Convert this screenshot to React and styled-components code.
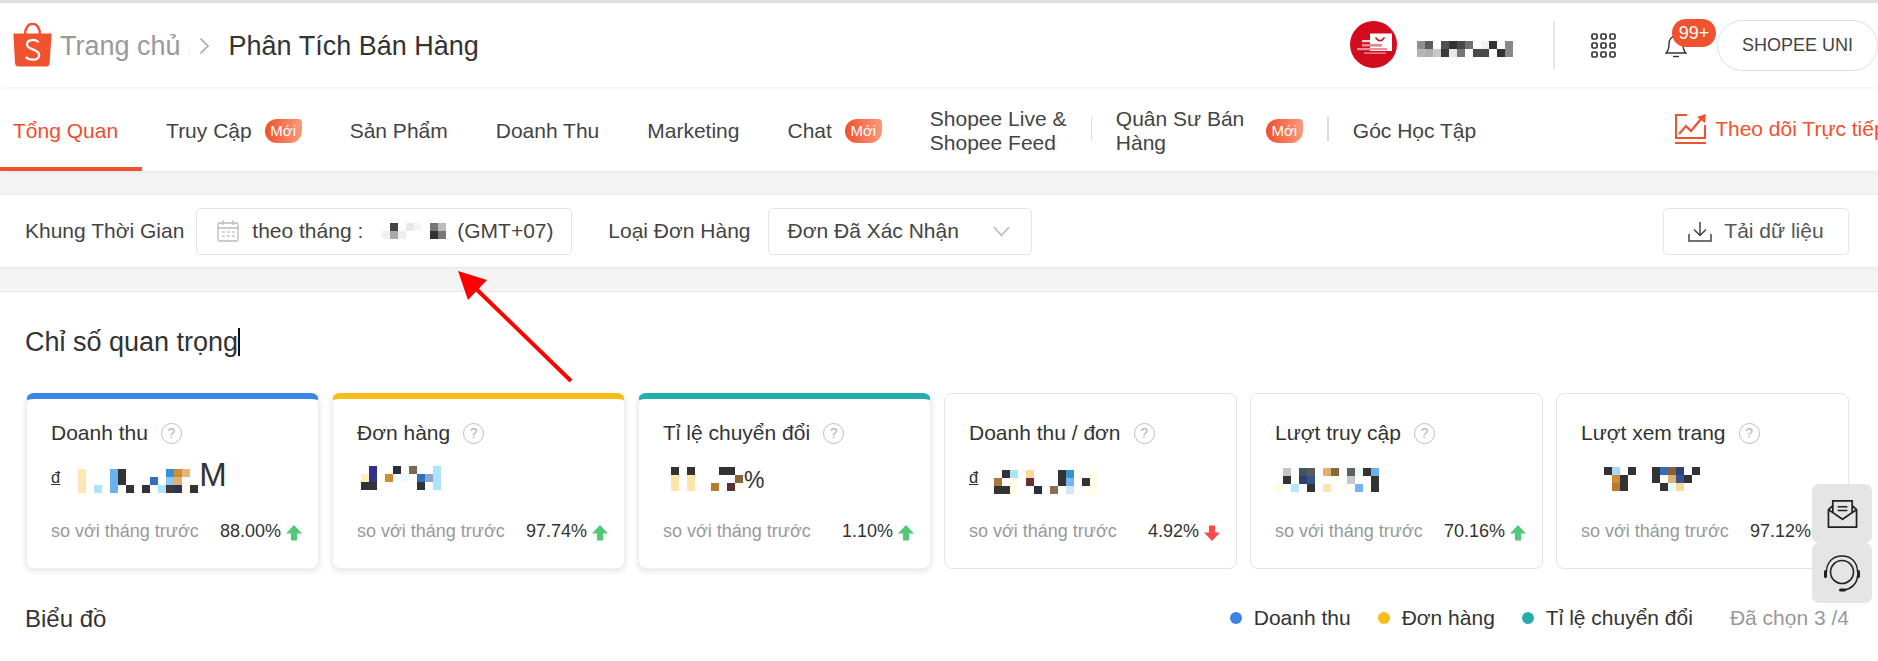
import React from "react";
import styled, { createGlobalStyle } from "styled-components";

const D = "#333333";
const Global = createGlobalStyle`
  html, body { margin: 0; padding: 0; width: 100%; height: 661px; overflow: hidden; background: #fff; }
  body { font-family: "Liberation Sans", Arial, sans-serif; color: #333; }
  #root { height: 661px; overflow: hidden; }
`;

const Page = styled.div`
  position: relative;
  width: 1878px;
  height: 661px;
  overflow: hidden;
  background: #f4f4f4;
  border-top: 3px solid #dddde3;
  box-sizing: border-box;
`;
const Header = styled.header`
  display: flex;
  align-items: center;
  height: 84px;
  padding-left: 13px;
  background: #fff;
  box-shadow: 0 1px 4px rgba(0, 0, 0, 0.06);
  position: relative;
  z-index: 2;
`;
const Crumb = styled.span`
  font-size: 27px;
  color: ${(p) => p.$color};
  margin-left: ${(p) => p.$ml}px;
  margin-top: 2px;
`;
const Chevron = styled.svg`
  width: 11px;
  height: 18px;
  margin-left: 18px;
  margin-top: 2px;
`;
const HeaderRight = styled.div`
  display: flex;
  align-items: center;
  margin-left: auto;
`;
const Avatar = styled.svg`
  width: 47px;
  height: 47px;
  margin-right: 20px;
  margin-top: -2px;
`;
const VDivider = styled.div`
  width: 2px;
  height: 48px;
  background: #e6e6e6;
  margin-left: 40px;
`;
const GridIcon = styled.svg`
  width: 25px;
  height: 25px;
  margin-left: 36px;
`;
const BellWrap = styled.div`
  position: relative;
  width: 22px;
  height: 24px;
  margin-left: 49px;
  margin-top: 2px;
`;
const Badge99 = styled.span`
  position: absolute;
  left: 7px;
  top: -15px;
  width: 44px;
  height: 28px;
  border-radius: 14px;
  background: #f0512e;
  color: #fff;
  font-size: 18px;
  line-height: 28px;
  text-align: center;
`;
const Pill = styled.button`
  width: 161px;
  height: 51px;
  margin-left: 30px;
  margin-top: 1px;
  border: 1px solid #dedede;
  border-radius: 26px;
  background: #fff;
  color: #444;
  font-family: inherit;
  font-size: 18px;
  padding: 0;
  box-sizing: border-box;
`;

const Nav = styled.nav`
  display: flex;
  align-items: stretch;
  height: 84px;
  background: #fff;
  white-space: nowrap;
  overflow: hidden;
  box-shadow: 0 1px 4px rgba(0, 0, 0, 0.06);
`;
const Tab = styled.div`
  display: flex;
  align-items: center;
  flex-shrink: 0;
  height: 84px;
  box-sizing: border-box;
  padding: 4px 24px 0 ${(p) => (p.$first ? 13 : 24)}px;
  font-size: 21px;
  line-height: 24px;
  color: ${(p) => (p.$active ? "#ee4d2d" : "#444")};
  border-bottom: 4px solid ${(p) => (p.$active ? "#f0512e" : "transparent")};
`;
const TabText = styled.span`
  white-space: ${(p) => (p.$wrap ? "normal" : "nowrap")};
  width: ${(p) => (p.$width ? `${p.$width}px` : "auto")};
  margin-top: 4px;
`;
const NewBadge = styled.span`
  display: inline-flex;
  align-items: center;
  justify-content: center;
  width: 37px;
  height: 24px;
  margin-left: 13px;
  margin-top: 4px;
  border-radius: 12px 4px 12px 12px;
  background: linear-gradient(90deg, #f0512e, #fb9a7c);
  color: #fff;
  font-size: 15px;
`;
const NavSep = styled.div`
  align-self: center;
  flex-shrink: 0;
  width: ${(p) => p.$w}px;
  height: 24px;
  background: #dddddd;
`;
const TrackLink = styled.div`
  display: flex;
  align-items: center;
  flex-shrink: 0;
  margin-left: 174px;
  color: #f0512e;
  font-size: 21px;
`;
const TrackIcon = styled.svg`
  width: 33px;
  height: 32px;
  margin-right: 8px;
`;

const FilterBar = styled.section`
  display: flex;
  align-items: center;
  height: 72px;
  margin-top: 24px;
  padding: 0 29px 0 25px;
  background: #fff;
  box-shadow: 0 1px 4px rgba(0, 0, 0, 0.06);
  font-size: 21px;
  color: #444;
`;
const FilterLabel = styled.span`
  flex-shrink: 0;
  margin-left: ${(p) => p.$ml || 0}px;
`;
const Field = styled.div`
  display: flex;
  align-items: center;
  flex-shrink: 0;
  height: 47px;
  width: ${(p) => p.$w}px;
  margin-left: ${(p) => p.$ml}px;
  box-sizing: border-box;
  border: 1px solid #e5e5e5;
  border-radius: 5px;
  padding-left: ${(p) => p.$pl}px;
  background: #fff;
  white-space: nowrap;
`;
const Zone = styled.span`
  margin-left: 11px;
`;
const CalIcon = styled.svg`
  width: 22px;
  height: 22px;
  margin-right: 13px;
  flex-shrink: 0;
`;
const Chev2 = styled.svg`
  width: 17px;
  height: 11px;
  margin-left: 34px;
`;
const DownloadBtn = styled.button`
  display: flex;
  align-items: center;
  justify-content: center;
  width: 186px;
  height: 47px;
  margin-left: auto;
  box-sizing: border-box;
  border: 1px solid #e5e5e5;
  border-radius: 5px;
  background: #fff;
  color: #555;
  font-family: inherit;
  font-size: 21px;
  padding: 0;
`;
const DownIcon = styled.svg`
  width: 24px;
  height: 21px;
  margin-right: 12px;
`;

const Content = styled.main`
  margin-top: 24px;
  height: 380px;
  box-sizing: border-box;
  padding: 35px 29px 0 25px;
  background: #fff;
  border-top: 1px solid #ececec;
`;
const Title = styled.h2`
  display: flex;
  align-items: center;
  margin: 0;
  height: 30px;
  font-size: 27px;
  font-weight: 400;
  color: #333;
`;
const Caret = styled.span`
  display: inline-block;
  width: 1.5px;
  height: 28px;
  background: #111;
`;
const Cards = styled.div`
  display: grid;
  grid-template-columns: repeat(6, 293px);
  column-gap: 13px;
  margin-top: 36px;
  margin-left: 1px;
`;
const Card = styled.article`
  height: 176px;
  box-sizing: border-box;
  padding: 26px 16px 0 24px;
  border: 1px solid ${(p) => (p.$color ? "#eeeeee" : "#e4e4e4")};
  border-radius: 8px;
  background: #fff;
  overflow: hidden;
  position: relative;
  ${(p) =>
    p.$color
      ? `border-top: 6px solid ${p.$color}; padding-top: 21px; box-shadow: 0 2px 6px rgba(0,0,0,0.12);`
      : ""}
`;
const CardTitle = styled.div`
  display: flex;
  align-items: center;
  height: 26px;
  font-size: 21px;
  color: #333;
  white-space: nowrap;
`;
const Help = styled.span`
  display: inline-flex;
  align-items: center;
  justify-content: center;
  width: 21px;
  height: 21px;
  margin-left: 13px;
  border: 1.5px solid #bdbdbd;
  border-radius: 50%;
  box-sizing: border-box;
  color: #b5b5b5;
  font-size: 14px;
`;
const ValueRow = styled.div`
  display: flex;
  align-items: center;
  height: 40px;
  margin-top: 11px;
`;
const Currency = styled.span`
  font-size: 16.5px;
  text-decoration: underline;
  color: #333;
`;
const BigSuffix = styled.span`
  font-size: ${(p) => p.$size}px;
  line-height: 32px;
  color: #333;
  margin-left: 1px;
  margin-top: ${(p) => p.$mt || 0}px;
`;
const Mosaic = styled.svg`
  display: block;
  flex-shrink: 0;
  margin-left: ${(p) => p.$ml || 0}px;
  margin-top: ${(p) => p.$mt || 0}px;
  shape-rendering: crispEdges;
`;
const CompareRow = styled.div`
  display: flex;
  align-items: center;
  height: 24px;
  margin-top: 22px;
`;
const CompareLabel = styled.span`
  flex: 1;
  font-size: 18px;
  color: #999;
  white-space: nowrap;
`;
const Percent = styled.span`
  font-size: 18px;
  color: #333;
`;
const TrendIcon = styled.svg`
  width: 16px;
  height: 16px;
  margin-left: 5px;
  margin-top: 4px;
  flex-shrink: 0;
`;
const ChartRow = styled.div`
  display: flex;
  align-items: center;
  margin-top: 35px;
  height: 28px;
`;
const ChartTitle = styled.h3`
  margin: 2px 0 0;
  font-size: 24px;
  font-weight: 400;
  color: #333;
`;
const Legend = styled.div`
  display: flex;
  align-items: center;
  margin-left: auto;
  font-size: 21px;
  color: #333;
`;
const LegendItem = styled.span`
  display: flex;
  align-items: center;
  margin-right: 27px;
`;
const Dot = styled.i`
  width: 12px;
  height: 12px;
  border-radius: 50%;
  margin-right: 12px;
  background: ${(p) => p.$color};
`;
const Selected = styled.span`
  color: #999;
  margin-left: 10px;
`;

const ArrowOverlay = styled.svg`
  position: absolute;
  left: 0;
  top: -3px;
  width: 700px;
  height: 400px;
  pointer-events: none;
`;
const FloatStack = styled.div`
  position: absolute;
  left: 1812px;
  top: 481px;
  width: 60px;
  z-index: 3;
`;
const FloatBtn = styled.div`
  display: flex;
  align-items: center;
  justify-content: center;
  height: ${(p) => p.$h}px;
  background: #e5e5e5;
  border-radius: 7px;
`;
const FloatIcon = styled.svg`
  width: ${(p) => p.$s}px;
  height: ${(p) => p.$s}px;
`;

const Pix = ({ cells, cols, rows = 3, ml, mt }) => {
  const w = cols * 8;
  const h = rows * 8;
  return (
    <Mosaic width={w} height={h} viewBox={`0 0 ${w} ${h}`} $ml={ml} $mt={mt} aria-hidden="true">
      {cells.map(([c, r, f], i) => (
        <rect key={i} x={c * 8} y={r * 8} width="8" height="8" fill={f} />
      ))}
    </Mosaic>
  );
};

const col = (c, fills) => fills.map((f, r) => (f ? [c, r, f] : null)).filter(Boolean);
const grid = (obj) => Object.entries(obj).flatMap(([c, fills]) => col(Number(c), fills));

const m1 = grid({
  0: ["#fde8b3", "#fde8b3", "#fde8b3"],
  2: [0, 0, "#aee3ff"],
  4: ["#6cb0ec", "#6cb0ec", "#6cb0ec"],
  5: [D, D, 0],
  6: [0, 0, D],
  8: [0, 0, D],
  9: [0, "#2f72b8", 0],
  10: [0, 0, "#aee3ff"],
  11: ["#3792d2", "#8ec8f2", "#40383a"],
  12: ["#cf8e35", "#e5b06e", "#2c3558"],
  13: ["#ebb477", 0, "#fffbee"],
  14: [0, 0, D],
});
const m2 = grid({
  0: [0, "#fbefc0", D],
  1: ["#30308e", "#30308e", D],
  3: [0, "#cf8e35", 0],
  4: ["#2d2d40", 0, 0],
  5: [0, "#e8fbff", 0],
  6: ["#7a6a55", 0, 0],
  7: [0, "#2f72b8", D],
  8: [0, "#8aa5cf", 0],
  9: ["#aee3ff", "#aee3ff", "#aee3ff"],
});
const m3 = grid({
  0: [D, "#fde3ae", "#fde3ae"],
  2: [D, "#fde3ae", "#fde3ae"],
  5: [0, 0, "#b87a32"],
  6: [D, 0, 0],
  7: [D, 0, "#5a3330"],
  8: [0, "#85663c", "#fffbee"],
});
const m4 = grid({
  0: [0, "#a9783c", D],
  1: [D, 0, D],
  2: ["#aee3ff", "#fffde8", "#fffde8"],
  4: ["#fdd89c", "#6a3030", 0],
  5: [0, 0, "#2d2d40"],
  7: [0, 0, "#8a6f55"],
  8: [D, D, 0],
  9: ["#3792d2", "#78b4ee", "#cfe6fb"],
  11: [0, D, 0],
  12: ["#fffde8", "#fffde8", "#fffde8"],
});
const m5 = grid({
  0: [0, 0, "#fffde0"],
  1: ["#c5c5c8", D, 0],
  2: [0, 0, "#b3e6ff"],
  3: ["#3e5560", "#2c3f6e", 0],
  4: ["#5a5a5a", "#34548c", D],
  6: ["#e0b070", 0, "#fde3b0"],
  7: ["#86683f", "#fffdf0", 0],
  8: [0, 0, "#fffdf0"],
  9: ["#5f5f5f", "#c5c8cc", 0],
  10: ["#eefaf8", 0, "#78b4ee"],
  11: [D, 0, 0],
  12: ["#6cb0ec", D, D],
});
const m6 = grid({
  0: [D, 0, 0],
  1: ["#a8d8f5", "#cf8e35", "#b87a32"],
  2: [0, D, D],
  3: [D, 0, 0],
  6: [D, D, 0],
  7: ["#3070b8", 0, D],
  8: ["#85603a", "#dfae76", "#e8fbff"],
  9: ["#2f4080", "#34548c", "#fdd89c"],
  10: [0, D, 0],
  11: [D, 0, 0],
});
const mName = grid({
  0: ["#8f8f8f", "#b5b5b5"],
  1: ["#5c5c5c", "#b0b0b0"],
  2: [0, "#c8c8c8"],
  3: ["#505050", "#3a3a3a"],
  4: ["#333333", "#e8e8e8"],
  5: ["#4a4a4a", "#777777"],
  6: ["#707070", 0],
  7: [0, "#4a4a4a"],
  8: ["#f0f0f0", "#4a4a4a"],
  9: ["#333333", 0],
  10: [0, "#333333"],
  11: ["#8a8a8a", "#8a8a8a"],
});
const mDate = grid({
  0: [0, "#f0f0f0"],
  1: ["#444444", "#aaaaaa"],
  2: [0, "#eeeeee"],
  3: ["#e8e8e8", 0],
  4: ["#f5f5f5", 0],
  6: ["#777777", "#333333"],
  7: ["#bbbbbb", "#777777"],
});

const cards = [
  { title: "Doanh thu", color: "#3a84e6", currency: true, pct: "88.00%", up: true, pix: m1, cols: 15, ml: 18, mt: 8, suffix: "M", size: 33, smt: -4 },
  { title: "Đơn hàng", color: "#f8bd18", pct: "97.74%", up: true, pix: m2, cols: 10, ml: 4, mt: 2 },
  { title: "Tỉ lệ chuyển đổi", color: "#24adab", pct: "1.10%", up: true, pix: m3, cols: 9, ml: 8, mt: 4, suffix: "%", size: 23, smt: 6 },
  { title: "Doanh thu / đơn", currency: true, pct: "4.92%", up: false, pix: m4, cols: 13, ml: 16, mt: 10 },
  { title: "Lượt truy cập", pct: "70.16%", up: true, pix: m5, cols: 13, mt: 6 },
  { title: "Lượt xem trang", pct: "97.12%", up: true, pix: m6, cols: 12, ml: 23, mt: 4 },
];

const Trend = ({ up }) => (
  <TrendIcon viewBox="0 0 16 16" aria-hidden="true">
    {up ? (
      <path d="M8 0 L16 8.5 H11 V15.5 H5 V8.5 H0 Z" fill="#52c878" />
    ) : (
      <path d="M8 16 L16 7.5 H11 V0.5 H5 V7.5 H0 Z" fill="#ff4a45" />
    )}
  </TrendIcon>
);

export default function App() {
  return (
    <>
      <Global />
      <Page>
        <Header>
          <svg width="39" height="44" viewBox="0 0 39 44" aria-label="Shopee">
            <path d="M12 12 C12 -3 27 -3 27 12" fill="none" stroke="#f1512d" strokeWidth="2.4" />
            <path d="M0.4 10.5 H38.6 L36.6 40 Q36.3 43.6 33 43.6 H5.5 Q2.4 43.6 2 40 Z" fill="#f1512d" />
            <path d="M25.6 19.2 C22.5 15.8 14 16.2 14 21.4 C14 27.2 26.2 25.6 26.2 32.2 C26.2 37.6 16.6 38 12.8 34" fill="none" stroke="#fff" strokeWidth="2.2" />
          </svg>
          <Crumb $color="#999" $ml={8}>Trang chủ</Crumb>
          <Chevron viewBox="0 0 11 18" aria-hidden="true">
            <path d="M1.5 1.5 L9 9 L1.5 16.5" fill="none" stroke="#b5b5b5" strokeWidth="1.8" />
          </Chevron>
          <Crumb $color="#333" $ml={19}>Phân Tích Bán Hàng</Crumb>
          <HeaderRight>
            <Avatar viewBox="0 0 47 47" aria-hidden="true">
              <circle cx="23.5" cy="23.5" r="23.5" fill="#d20b1f" />
              <path d="M20 12.5 H42 V30 H20 Z" fill="#fff" />
              <path d="M25.5 16.5 Q30 23 34.5 16.5" fill="none" stroke="#d20b1f" strokeWidth="1.5" />
              <rect x="12" y="19" width="8" height="2.2" fill="#f8d5d8" />
              <rect x="12" y="23" width="20" height="2.6" fill="#e8858c" />
              <rect x="7" y="27" width="30" height="2.2" fill="#ea9096" />
              <rect x="14" y="31.5" width="22" height="1.2" fill="#ef9ea4" />
            </Avatar>
            <Pix cells={mName} cols={12} rows={2} mt={8} />
            <VDivider />
            <GridIcon viewBox="0 0 25 25" aria-hidden="true">
              {[0, 1, 2].flatMap((r) =>
                [0, 1, 2].map((c) => (
                  <rect key={`${r}${c}`} x={1 + c * 9} y={1 + r * 9} width="5" height="5" rx="1.2" fill="none" stroke="#333" strokeWidth="1.7" />
                ))
              )}
            </GridIcon>
            <BellWrap>
              <svg width="22" height="24" viewBox="0 0 22 24" aria-hidden="true">
                <path d="M1 19 C3.5 17 4 14 4 10 C4 5 7 2 11 2 C15 2 18 5 18 10 C18 14 18.5 17 21 19 Z" fill="none" stroke="#333" strokeWidth="1.4" />
                <path d="M8 22.5 H14" stroke="#333" strokeWidth="1.4" />
              </svg>
              <Badge99>99+</Badge99>
            </BellWrap>
            <Pill>SHOPEE UNI</Pill>
          </HeaderRight>
        </Header>

        <Nav>
          <Tab $first $active><TabText>Tổng Quan</TabText></Tab>
          <Tab><TabText>Truy Cập</TabText><NewBadge>Mới</NewBadge></Tab>
          <Tab><TabText>Sản Phẩm</TabText></Tab>
          <Tab><TabText>Doanh Thu</TabText></Tab>
          <Tab><TabText>Marketing</TabText></Tab>
          <Tab><TabText>Chat</TabText><NewBadge>Mới</NewBadge></Tab>
          <Tab><TabText $wrap $width={137}>Shopee Live &amp; Shopee Feed</TabText></Tab>
          <NavSep $w={1} />
          <Tab><TabText $wrap $width={137}>Quân Sư Bán Hàng</TabText><NewBadge>Mới</NewBadge></Tab>
          <NavSep $w={2} />
          <Tab><TabText>Góc Học Tập</TabText></Tab>
          <TrackLink>
            <TrackIcon viewBox="0 0 33 32" aria-hidden="true">
              <path d="M13 2 H2 V25 H31 V12" fill="none" stroke="#f0512e" strokeWidth="2" />
              <path d="M5 21 L12 13 L17 18 L27 6" fill="none" stroke="#f0512e" strokeWidth="2.2" />
              <path d="M32 1 L31 10 L23 4 Z" fill="#f0512e" />
              <rect x="1" y="29" width="31" height="2" fill="#f0512e" />
            </TrackIcon>
            Theo dõi Trực tiếp
          </TrackLink>
        </Nav>

        <FilterBar>
          <FilterLabel>Khung Thời Gian</FilterLabel>
          <Field $w={376} $pl={20} $ml={12}>
            <CalIcon viewBox="0 0 22 22" aria-hidden="true">
              <rect x="1" y="3" width="20" height="18" rx="1.5" fill="none" stroke="#bbb" strokeWidth="1.3" />
              <path d="M1 8 H21 M6 0.5 V5 M16 0.5 V5" stroke="#bbb" strokeWidth="1.3" />
              <path d="M5 12 H8 M10 12 H13 M15 12 H18 M5 16 H8 M10 16 H13 M15 16 H18" stroke="#c8c8c8" strokeWidth="1.3" />
            </CalIcon>
            theo tháng :
            <Pix cells={mDate} cols={8} rows={2} ml={19} />
            <Zone>(GMT+07)</Zone>
          </Field>
          <FilterLabel $ml={36}>Loại Đơn Hàng</FilterLabel>
          <Field $w={264} $pl={19} $ml={17}>
            Đơn Đã Xác Nhận
            <Chev2 viewBox="0 0 17 11" aria-hidden="true">
              <path d="M1 1 L8.5 9.5 L16 1" fill="none" stroke="#bbb" strokeWidth="1.6" />
            </Chev2>
          </Field>
          <DownloadBtn>
            <DownIcon viewBox="0 0 24 21" aria-hidden="true">
              <path d="M12 1 V14 M6 8.5 L12 14.5 L18 8.5" fill="none" stroke="#444" strokeWidth="1.5" />
              <path d="M1 13 V20 H23 V13" fill="none" stroke="#444" strokeWidth="1.5" />
            </DownIcon>
            Tải dữ liệu
          </DownloadBtn>
        </FilterBar>

        <Content>
          <Title>Chỉ số quan trọng<Caret /></Title>
          <Cards>
            {cards.map((c) => (
              <Card key={c.title} $color={c.color}>
                <CardTitle>{c.title}<Help>?</Help></CardTitle>
                <ValueRow>
                  {c.currency && <Currency>đ</Currency>}
                  <Pix cells={c.pix} cols={c.cols} ml={c.ml} mt={c.mt} />
                  {c.suffix && <BigSuffix $size={c.size} $mt={c.smt}>{c.suffix}</BigSuffix>}
                </ValueRow>
                <CompareRow>
                  <CompareLabel>so với tháng trước</CompareLabel>
                  <Percent>{c.pct}</Percent>
                  <Trend up={c.up} />
                </CompareRow>
              </Card>
            ))}
          </Cards>
          <ChartRow>
            <ChartTitle>Biểu đồ</ChartTitle>
            <Legend>
              <LegendItem><Dot $color="#3a84e6" />Doanh thu</LegendItem>
              <LegendItem><Dot $color="#f8bd18" />Đơn hàng</LegendItem>
              <LegendItem><Dot $color="#24adab" />Tỉ lệ chuyển đổi</LegendItem>
              <Selected>Đã chọn 3 /4</Selected>
            </Legend>
          </ChartRow>
        </Content>

        <ArrowOverlay viewBox="0 0 700 400" aria-hidden="true">
          <path d="M571 381 L468 281" stroke="#ff0000" strokeWidth="4" fill="none" />
          <path d="M458 271 L487 280 L468 300 Z" fill="#ff0000" />
        </ArrowOverlay>

        <FloatStack>
          <FloatBtn $h={59}>
            <FloatIcon $s={31} viewBox="0 0 32 32" aria-hidden="true">
              <path d="M1.5 12 V30 H30.5 V12 L16 22 Z" fill="none" stroke="#222" strokeWidth="1.8" strokeLinejoin="round" />
              <path d="M6 15.5 V3 H26 V15.5" fill="none" stroke="#222" strokeWidth="1.8" />
              <path d="M11 9 H21 M11 13 H21" stroke="#222" strokeWidth="1.6" />
              <path d="M1.5 12 L6 8 M30.5 12 L26 8" stroke="#222" strokeWidth="1.8" />
            </FloatIcon>
          </FloatBtn>
          <FloatBtn $h={60}>
            <FloatIcon $s={38} viewBox="0 0 38 38" aria-hidden="true">
              <path d="M3.5 18 C3.5 8 10 2 19 2 C28 2 34.5 8 34.5 18" fill="none" stroke="#222" strokeWidth="1.4" />
              <circle cx="19" cy="18" r="11.5" fill="none" stroke="#222" strokeWidth="1.6" />
              <path d="M34.5 22 C34 30 28 35 21 36" fill="none" stroke="#222" strokeWidth="1.6" />
              <rect x="1" y="16" width="3" height="8" rx="1.5" fill="#222" />
              <rect x="34" y="16" width="3" height="8" rx="1.5" fill="#222" />
              <rect x="16" y="34.5" width="7" height="3" rx="1.5" fill="#222" />
            </FloatIcon>
          </FloatBtn>
        </FloatStack>
      </Page>
    </>
  );
}
